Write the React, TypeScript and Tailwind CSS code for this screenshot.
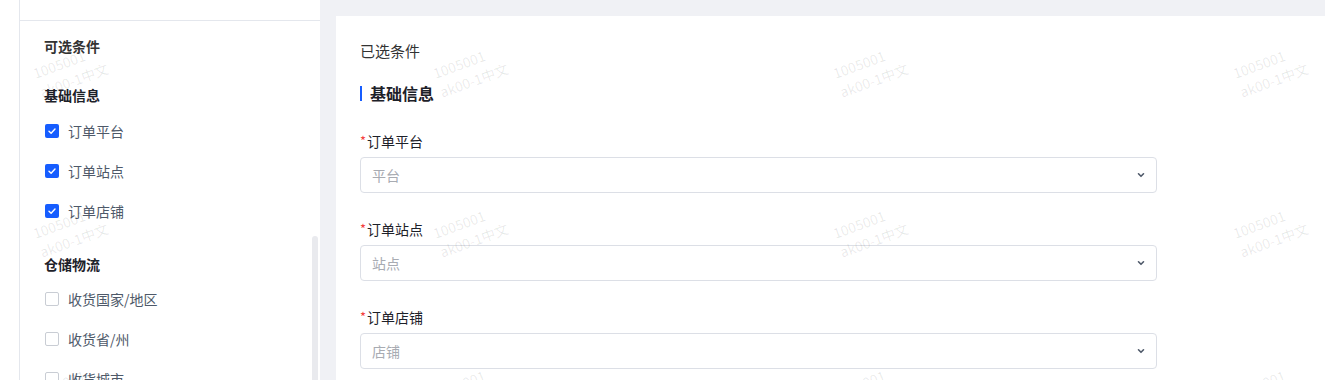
import React from "react";

const FONT = { fontFamily: '"Noto Sans CJK SC", "Noto Sans", sans-serif' };

function Checked({ label }: { label: string }) {
  return (
    <div className="flex items-center h-[40px]">
      <span className="w-[14px] h-[14px] rounded-[2px] bg-[#165dff] flex items-center justify-center ml-[1px]">
        <svg width="10" height="10" viewBox="0 0 10 10">
          <path d="M2 5.2 L4.1 7.2 L8 3" fill="none" stroke="#fff" strokeWidth="1.4" strokeLinecap="round" strokeLinejoin="round" />
        </svg>
      </span>
      <span className="ml-[9px] text-[14px] text-[#4e5969]">{label}</span>
    </div>
  );
}

function Unchecked({ label }: { label: string }) {
  return (
    <div className="flex items-center h-[40px]">
      <span className="w-[14px] h-[14px] rounded-[2px] border border-[#c9cdd4] bg-white ml-[1px]" />
      <span className="ml-[9px] text-[14px] text-[#4e5969]">{label}</span>
    </div>
  );
}

function Field({ label, placeholder }: { label: string; placeholder: string }) {
  return (
    <div className="flex flex-col">
      <div className="h-[20px] flex items-center text-[14px] text-[#1d2129]">
        <span className="text-[#f53f3f] text-[13px] mr-[1px]">*</span>
        {label}
      </div>
      <div className="mt-[6px] h-[36px] w-[797px] rounded-[4px] border border-[#dcdfe6] flex items-center justify-between pl-[11px] pr-[10px]">
        <span className="text-[14px] text-[#a8abb2]">{placeholder}</span>
        <svg width="10" height="10" viewBox="0 0 10 10">
          <path d="M2.5 3.8 L5 6.3 L7.5 3.8" fill="none" stroke="#4e5969" strokeWidth="1.6" strokeLinecap="round" strokeLinejoin="round" />
        </svg>
      </div>
    </div>
  );
}

function Watermark({ x, y }: { x: number; y: number }) {
  return (
    <div
      className="absolute text-[14px] leading-[20px] text-[#000000]/[0.09] pointer-events-none select-none"
      style={{ left: x, top: y, transform: "rotate(-20deg)", transformOrigin: "left top" }}
    >
      <div>1005001</div>
      <div>ak00-1中文</div>
    </div>
  );
}

export default function App() {
  const marks: { x: number; y: number }[] = [];
  for (const y of [64, 224, 384]) {
    for (const x of [30, 430, 830, 1230]) marks.push({ x, y });
  }
  return (
    <div className="relative w-[1325px] h-[380px] overflow-hidden bg-[#f0f1f5] flex" style={FONT}>
      <div className="w-[320px] h-full bg-white pl-[19px] flex">
        <div className="flex-1 border-l border-[#e4e7ed] flex flex-col relative">
          <div className="h-[21px] border-b border-[#e4e7ed] shrink-0" />
          <div className="pl-[24px] flex flex-col">
            <div className="mt-[15px] h-[20px] flex items-center text-[14px] font-bold text-[#333]">可选条件</div>
            <div className="mt-[29px] h-[20px] flex items-center text-[14px] font-bold text-[#1d2129]">基础信息</div>
            <div className="mt-[6px] flex flex-col">
              <Checked label="订单平台" />
              <Checked label="订单站点" />
              <Checked label="订单店铺" />
            </div>
            <div className="mt-[23px] h-[20px] flex items-center text-[14px] font-bold text-[#1d2129]">仓储物流</div>
            <div className="mt-[5px] flex flex-col">
              <Unchecked label="收货国家/地区" />
              <Unchecked label="收货省/州" />
              <Unchecked label="收货城市" />
            </div>
          </div>
          <div className="absolute left-[292px] top-[236px] w-[6px] h-[160px] rounded-[3px] bg-[#e9eaee]" />
        </div>
      </div>
      <div className="flex-1 pl-[16px] pt-[16px]">
        <div className="bg-white h-full pl-[24px] flex flex-col">
          <div className="mt-[25px] h-[20px] flex items-center text-[15px] text-[#333]">已选条件</div>
          <div className="mt-[22px] flex items-center h-[20px]">
            <span className="w-[2px] h-[15px] bg-[#165dff]" />
            <span className="ml-[8px] text-[16px] font-bold text-[#1d2129]">基础信息</span>
          </div>
          <div className="mt-[28px] flex flex-col gap-[26px]">
            <Field label="订单平台" placeholder="平台" />
            <Field label="订单站点" placeholder="站点" />
            <Field label="订单店铺" placeholder="店铺" />
          </div>
        </div>
      </div>
      {marks.map((m, i) => (
        <Watermark key={i} x={m.x} y={m.y} />
      ))}
    </div>
  );
}
